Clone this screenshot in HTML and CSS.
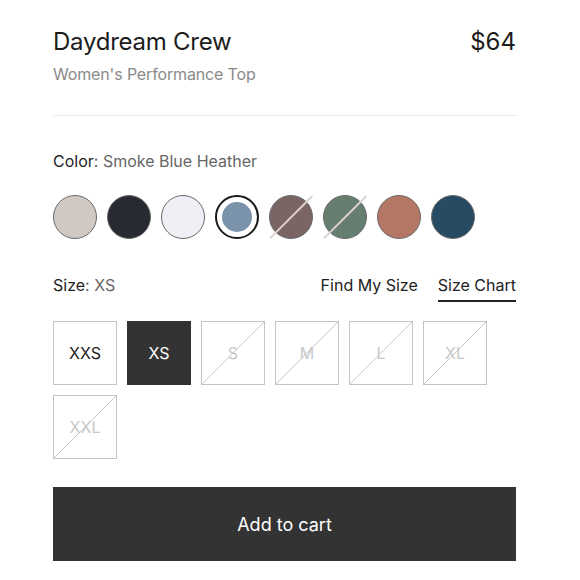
FILE: index.html
```html
<!DOCTYPE html>
<html>
<head>
<meta charset="utf-8">
<link rel="stylesheet" href="styles.css">
</head>
<body>
<div class="page">
  <header class="head">
    <div class="titles">
      <h1 class="title">Daydream Crew</h1>
      <p class="subtitle">Women's Performance Top</p>
    </div>
    <div class="price">$64</div>
  </header>
  <hr class="divider">
  <div class="label"><span class="key">Color</span>: Smoke Blue Heather</div>
  <div class="swatches">
    <span class="swatch c1"></span>
    <span class="swatch c2"></span>
    <span class="swatch c3"></span>
    <span class="swatch selected"><span class="inner c4"></span></span>
    <span class="swatch c5 sold"></span>
    <span class="swatch c6 sold"></span>
    <span class="swatch c7"></span>
    <span class="swatch c8"></span>
  </div>
  <div class="size-row">
    <div class="label"><span class="key">Size</span>: XS</div>
    <div class="links">
      <a class="link">Find My Size</a>
      <a class="link active">Size Chart</a>
    </div>
  </div>
  <div class="sizes">
    <div class="size">XXS</div>
    <div class="size on">XS</div>
    <div class="size off">S</div>
    <div class="size off">M</div>
    <div class="size off">L</div>
    <div class="size off">XL</div>
    <div class="size off">XXL</div>
  </div>
  <button class="cart">Add to cart</button>
</div>
</body>
</html>
```

FILE: styles.css
```css
* { box-sizing: border-box; }
html, body { margin: 0; padding: 0; background: #fff; }
body { font-family: Inter, "Noto Sans", sans-serif; color: #222; }
.page { padding: 27px 64px 0 53px; }
.head { display: flex; justify-content: space-between; align-items: flex-start; }
.title { margin: 0; font-size: 24px; font-weight: 400; line-height: 30px; color: #1c1c1c; letter-spacing: -0.25px; }
.subtitle { margin: 6px 0 0; font-size: 16px; line-height: 22px; color: #8a8a8a; letter-spacing: -0.15px; }
.price { font-size: 24px; line-height: 30px; color: #1c1c1c; }
.divider { border: 0; height: 1px; background: #e8e8e8; margin: 30px 0 0; }
.label { font-size: 16px; line-height: 22px; color: #666; margin-top: 34px; }
.label .key { color: #222; }
.swatches { display: flex; gap: 10px; margin-top: 23px; }
.swatch { width: 44px; height: 44px; border-radius: 50%; border: 1px solid #6a6a6a; position: relative; display: flex; align-items: center; justify-content: center; flex: none; }
.c1 { background: #cfc8c3; }
.c2 { background: #272b31; }
.c3 { background: #eef0f6; }
.c4 { background: #7a93ab; }
.c5 { background: #7b6564; }
.c6 { background: #657e6f; }
.c7 { background: #b47765; }
.c8 { background: #264b62; }
.selected { border: 2px solid #1a1a1a; background: #fff; }
.inner { width: 30px; height: 30px; border-radius: 50%; }
.sold::after { content: ""; position: absolute; left: 50%; top: 50%; width: 60px; height: 1.5px; background: #dcd3ce; transform: translate(-50%, -50%) rotate(-45deg); }
.size-row { display: flex; justify-content: space-between; align-items: flex-end; margin-top: 35px; }
.size-row .label { margin-top: 0; padding-bottom: 6px; }
.links { display: flex; gap: 20px; }
.link { font-size: 16px; line-height: 22px; color: #222; padding-bottom: 4px; border-bottom: 2px solid transparent; }
.link.active { border-bottom-color: #222; }
.sizes { display: flex; flex-wrap: wrap; gap: 10px; margin-top: 19px; width: 440px; }
.size { width: 64px; height: 64px; border: 1px solid #c4c4c4; display: flex; align-items: center; justify-content: center; font-size: 16px; color: #222; }
.size.on { background: #333; border-color: #333; color: #fff; }
.size.off { color: #c8c8c8; background: linear-gradient(to bottom right, transparent calc(50% - 0.7px), #c8c8c8 50%, transparent calc(50% + 0.7px)); }
.cart { display: block; width: 463px; height: 74px; margin-top: 28px; border: 0; background: #333; color: #fff; font-family: inherit; font-size: 18px; }
```
